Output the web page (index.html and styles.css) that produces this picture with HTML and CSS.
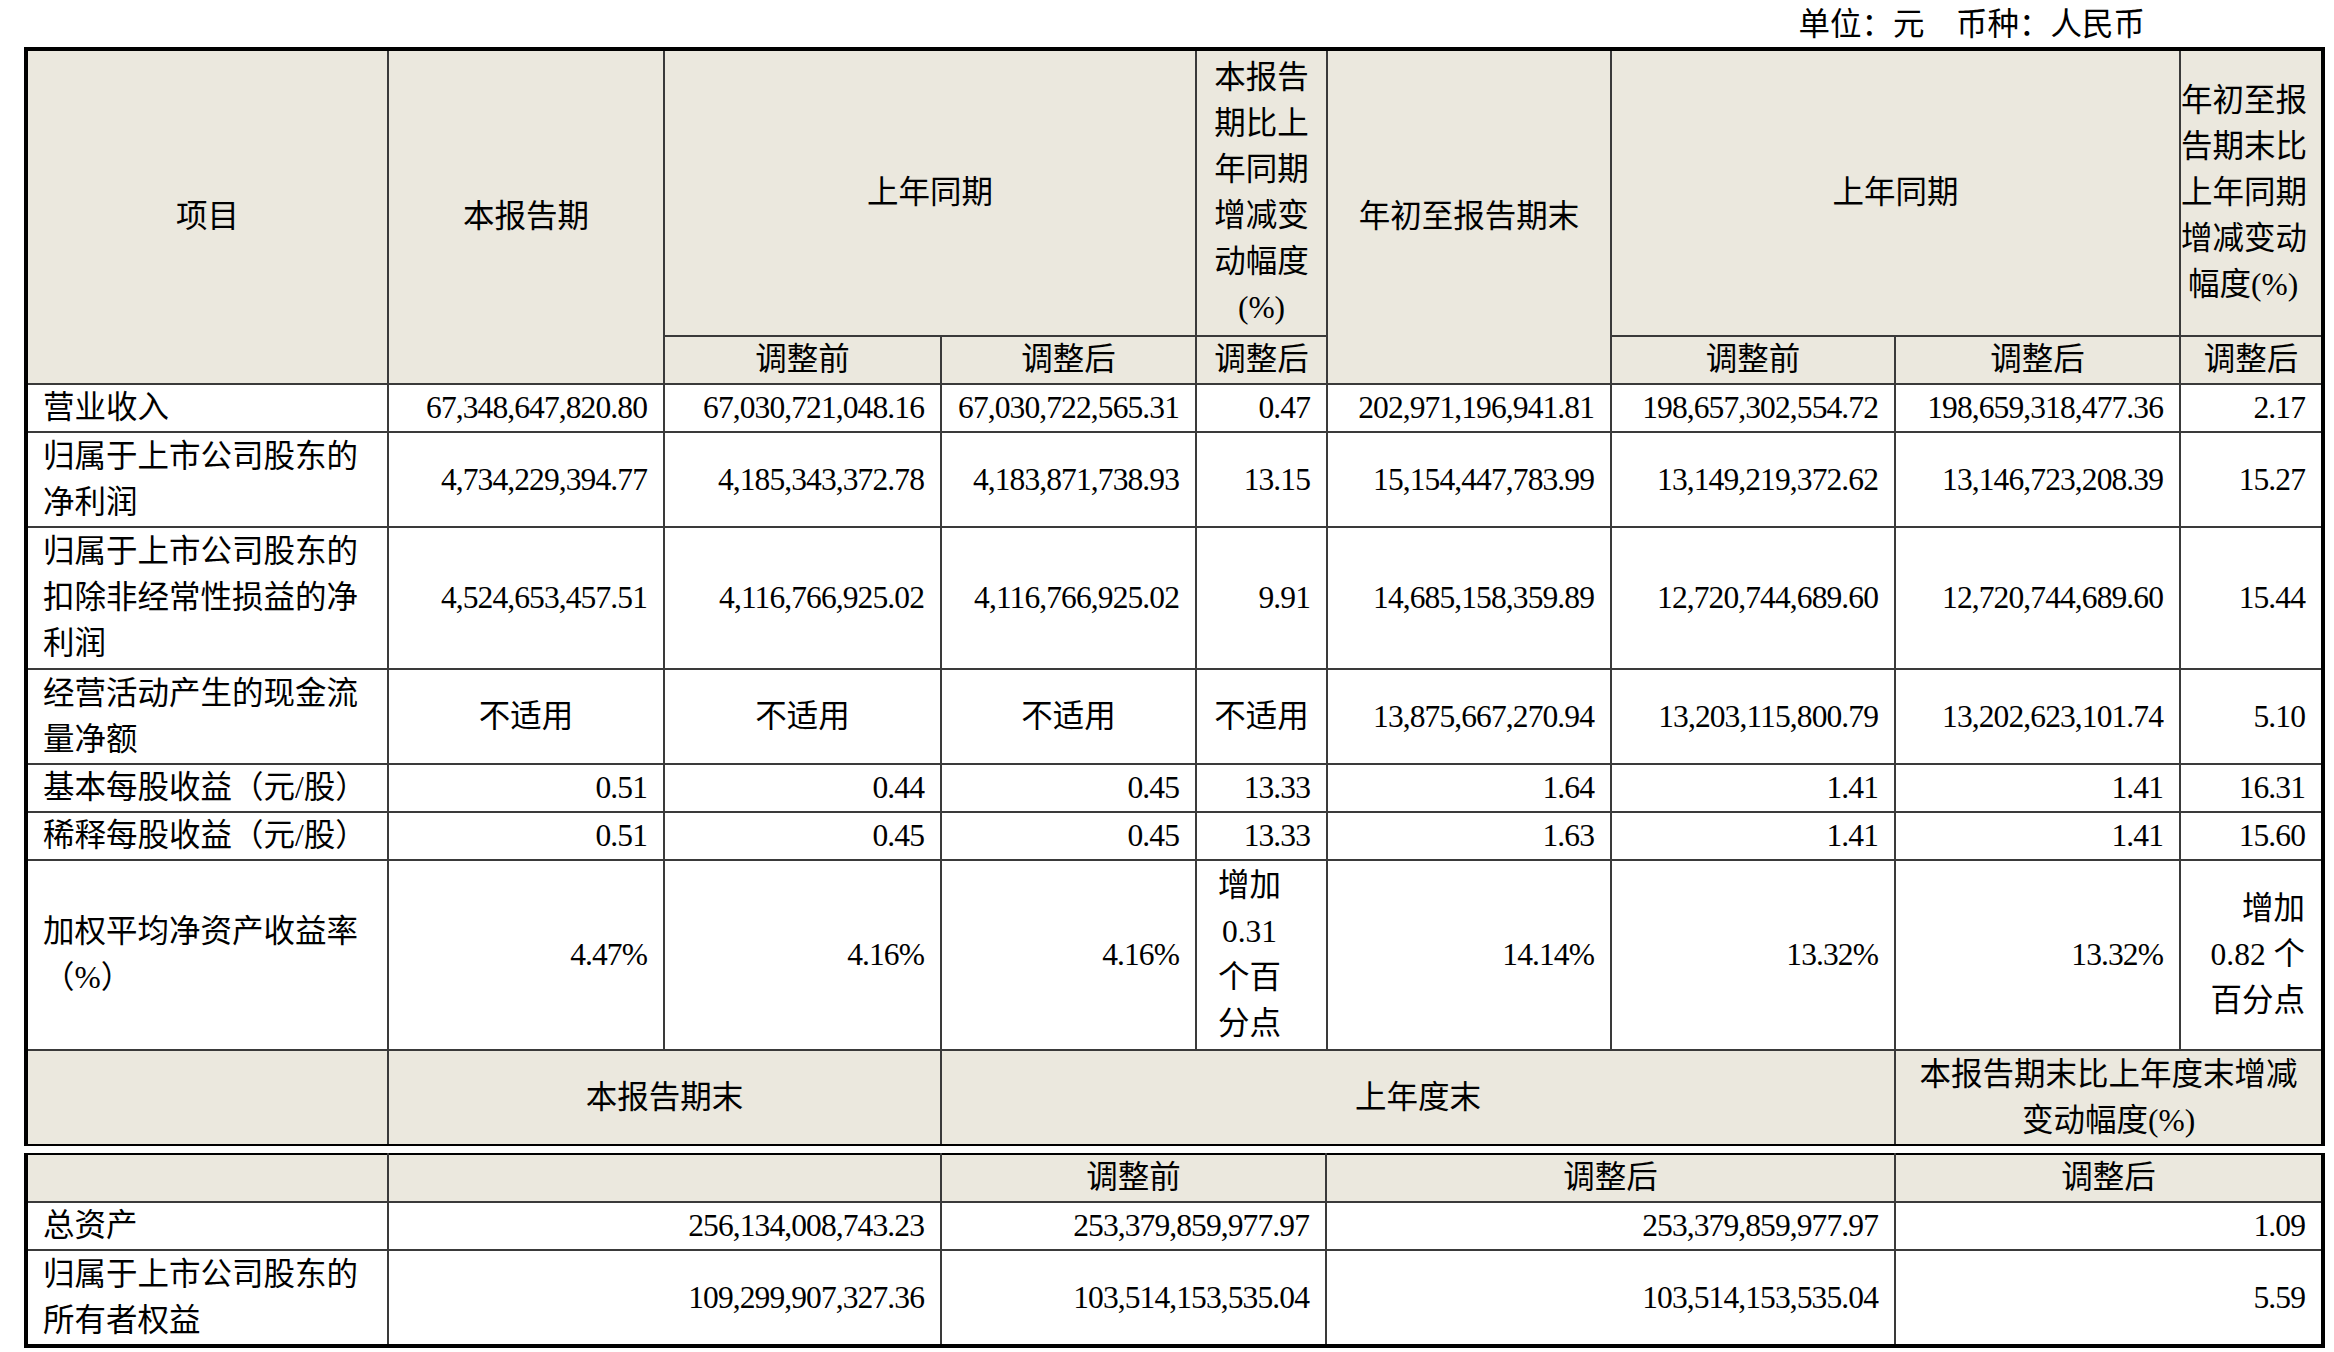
FILE: index.html
```html
<!DOCTYPE html>
<html lang="zh-CN">
<head>
<meta charset="utf-8">
<title>主要会计数据和财务指标</title>
<link rel="stylesheet" href="styles.css">
</head>
<body>
<div class="page">
  <div class="unit">单位：元　币种：人民币</div>
  <table class="t1">
    <colgroup>
      <col class="c362"><col class="c276"><col class="c277"><col class="c255"><col class="c131"><col class="c284"><col class="c284"><col class="c285"><col class="c143">
    </colgroup>
    <tr class="hd ha">
      <td rowspan="2">项目</td>
      <td rowspan="2">本报告期</td>
      <td colspan="2">上年同期</td>
      <td>本报告<br>期比上<br>年同期<br>增减变<br>动幅度<br>(%)</td>
      <td rowspan="2">年初至报告期末</td>
      <td colspan="2">上年同期</td>
      <td class="narrow">年初至报<br>告期末比<br>上年同期<br>增减变动<br>幅度(%)</td>
    </tr>
    <tr class="hd hb">
      <td>调整前</td><td>调整后</td><td>调整后</td><td>调整前</td><td>调整后</td><td>调整后</td>
    </tr>
    <tr class="r1">
      <td class="lab">营业收入</td>
      <td>67,348,647,820.80</td><td>67,030,721,048.16</td><td>67,030,722,565.31</td><td>0.47</td>
      <td>202,971,196,941.81</td><td>198,657,302,554.72</td><td>198,659,318,477.36</td><td>2.17</td>
    </tr>
    <tr class="r2">
      <td class="lab">归属于上市公司股东的<br>净利润</td>
      <td>4,734,229,394.77</td><td>4,185,343,372.78</td><td>4,183,871,738.93</td><td>13.15</td>
      <td>15,154,447,783.99</td><td>13,149,219,372.62</td><td>13,146,723,208.39</td><td>15.27</td>
    </tr>
    <tr class="r3">
      <td class="lab">归属于上市公司股东的<br>扣除非经常性损益的净<br>利润</td>
      <td>4,524,653,457.51</td><td>4,116,766,925.02</td><td>4,116,766,925.02</td><td>9.91</td>
      <td>14,685,158,359.89</td><td>12,720,744,689.60</td><td>12,720,744,689.60</td><td>15.44</td>
    </tr>
    <tr class="r2">
      <td class="lab">经营活动产生的现金流<br>量净额</td>
      <td class="ctr">不适用</td><td class="ctr">不适用</td><td class="ctr">不适用</td><td class="ctr">不适用</td>
      <td>13,875,667,270.94</td><td>13,203,115,800.79</td><td>13,202,623,101.74</td><td>5.10</td>
    </tr>
    <tr class="r1">
      <td class="lab">基本每股收益（元/股）</td>
      <td>0.51</td><td>0.44</td><td>0.45</td><td>13.33</td>
      <td>1.64</td><td>1.41</td><td>1.41</td><td>16.31</td>
    </tr>
    <tr class="r1">
      <td class="lab">稀释每股收益（元/股）</td>
      <td>0.51</td><td>0.45</td><td>0.45</td><td>13.33</td>
      <td>1.63</td><td>1.41</td><td>1.41</td><td>15.60</td>
    </tr>
    <tr class="r4">
      <td class="lab">加权平均净资产收益率<br>（%）</td>
      <td>4.47%</td><td>4.16%</td><td>4.16%</td>
      <td class="inc">增加<br>0.31<br>个百<br>分点</td>
      <td>14.14%</td><td>13.32%</td><td>13.32%</td>
      <td class="txt">增加<br>0.82 个<br>百分点</td>
    </tr>
    <tr class="hd r2 last">
      <td></td>
      <td colspan="2">本报告期末</td>
      <td colspan="4">上年度末</td>
      <td colspan="2">本报告期末比上年度末增减<br>变动幅度(%)</td>
    </tr>
  </table>
  <table class="t2">
    <colgroup>
      <col class="c362"><col class="c553"><col class="c385"><col class="c569"><col class="c428">
    </colgroup>
    <tr class="hd r1 first">
      <td></td><td></td><td>调整前</td><td>调整后</td><td>调整后</td>
    </tr>
    <tr class="r1">
      <td class="lab">总资产</td>
      <td>256,134,008,743.23</td><td>253,379,859,977.97</td><td>253,379,859,977.97</td><td>1.09</td>
    </tr>
    <tr class="r2">
      <td class="lab">归属于上市公司股东的<br>所有者权益</td>
      <td>109,299,907,327.36</td><td>103,514,153,535.04</td><td>103,514,153,535.04</td><td>5.59</td>
    </tr>
  </table>
</div>
</body>
</html>
```
FILE: styles.css
```css
body {
  margin: 0;
  background: #ffffff;
  color: #000000;
  font-family: "Liberation Serif", "Noto Sans CJK SC", serif;
  font-size: 31.5px;
}

.page {
  padding-left: 24px;
  width: 2301px;
}

.unit {
  height: 47px;
  line-height: 50px;
  text-align: right;
  padding-right: 180px;
}

table {
  border-collapse: collapse;
  table-layout: fixed;
  width: 2301px;
  border: 4px solid #000000;
}

.t1 {
  border-bottom: 2px solid #000000;
}

.t2 {
  margin-top: 7px;
  border-top: 2px solid #000000;
}

.t1 tr.last td {
  border-bottom-color: #000000;
}

.t2 tr.first td {
  border-top-color: #000000;
}

td {
  border: 2px solid #3a3a3a;
  padding: 0 16px 0 2px;
  line-height: 46px;
  white-space: nowrap;
  text-align: right;
  vertical-align: middle;
  letter-spacing: -0.9px;
}

.hd td {
  background: #ebe8de;
  text-align: center;
  padding: 0 2px;
  letter-spacing: 0;
}

.hd td.narrow {
  padding: 0 16px 0 0;
}

td.lab {
  text-align: left;
  padding-left: 15px;
  letter-spacing: 0;
}

td.ctr {
  text-align: center;
  padding: 0 2px;
  letter-spacing: 0;
}

td.inc {
  text-align: center;
  padding: 0 24px 0 0;
  letter-spacing: 0;
}

td.txt {
  letter-spacing: 0;
}

.ha td { height: 284px; }
.hb td { height: 45px; }
.r1 td { height: 46px; }
.r2 td { height: 93px; }
.r3 td { height: 140px; }
.r4 td { height: 188px; }

.c362 { width: 362px; }
.c276 { width: 276px; }
.c277 { width: 277px; }
.c255 { width: 255px; }
.c131 { width: 131px; }
.c284 { width: 284px; }
.c285 { width: 285px; }
.c143 { width: 143px; }
.c553 { width: 553px; }
.c385 { width: 385px; }
.c569 { width: 569px; }
.c428 { width: 428px; }
```
